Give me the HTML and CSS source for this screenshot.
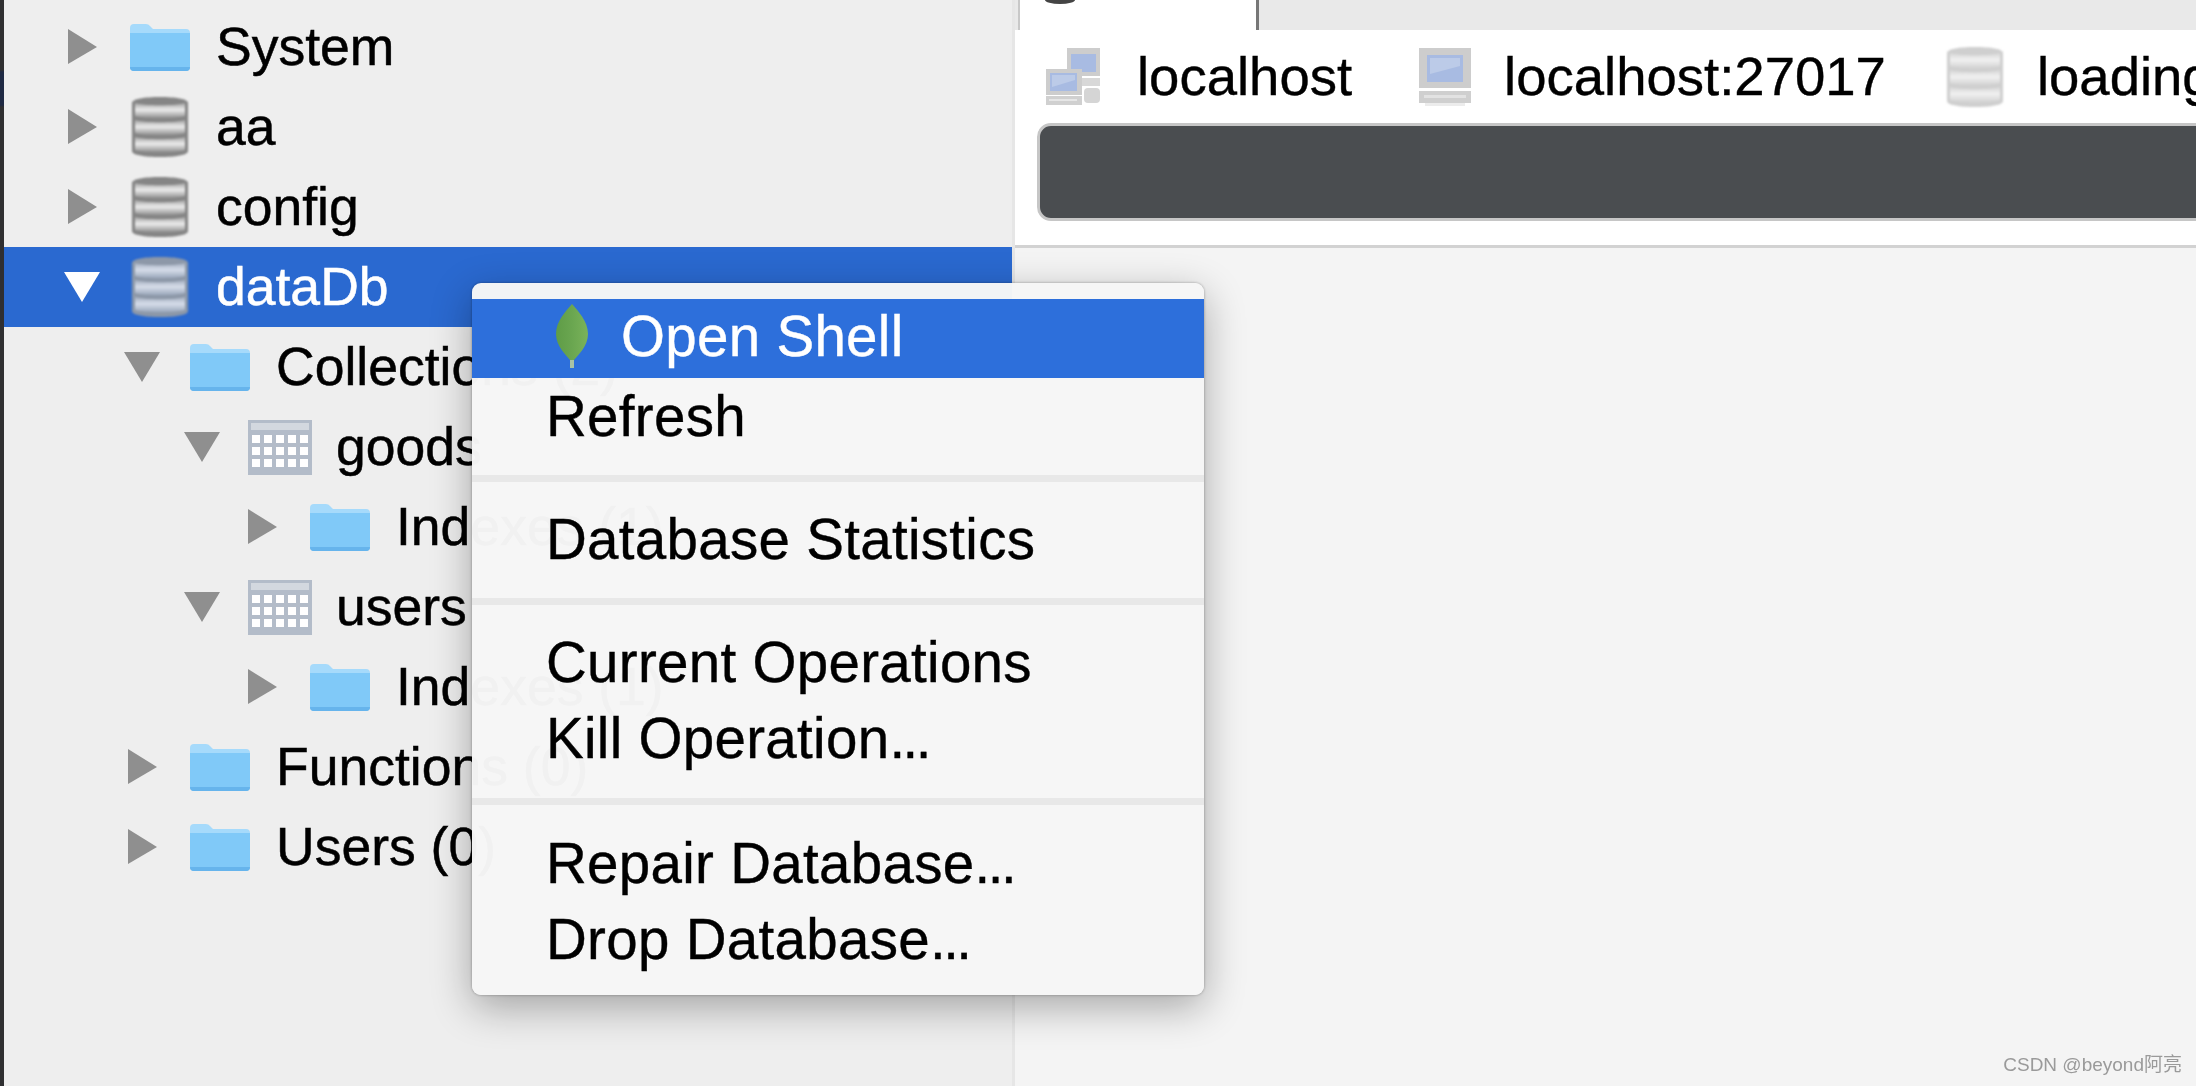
FILE: index.html
```html
<!DOCTYPE html>
<html lang="en">
<head>
  <meta charset="UTF-8">
  <meta name="viewport" content="width=device-width, initial-scale=1.0">
  <title>Robo 3T</title>
  <link rel="stylesheet" href="styles.css">
</head>
<body>
  <svg class="sprites" width="0" height="0">
    <defs>
      <linearGradient id="band" x1="0" y1="0" x2="0" y2="1">
        <stop offset="0" stop-color="#a3a3a3"/>
        <stop offset="0.45" stop-color="#ececec"/>
        <stop offset="1" stop-color="#8e8e8e"/>
      </linearGradient>
      <linearGradient id="bandLight" x1="0" y1="0" x2="0" y2="1">
        <stop offset="0" stop-color="#d6d6d6"/>
        <stop offset="0.45" stop-color="#f1f1f1"/>
        <stop offset="1" stop-color="#d2d2d2"/>
      </linearGradient>
      <linearGradient id="bandSel" x1="0" y1="0" x2="0" y2="1">
        <stop offset="0" stop-color="#a3aebf"/>
        <stop offset="0.45" stop-color="#d7deea"/>
        <stop offset="1" stop-color="#99a6ba"/>
      </linearGradient>
      <linearGradient id="leafFill" x1="0" y1="0" x2="1" y2="0">
        <stop offset="0" stop-color="#5f9c47"/>
        <stop offset="0.5" stop-color="#6aa650"/>
        <stop offset="1" stop-color="#7ab35a"/>
      </linearGradient>
      <symbol id="folder" viewBox="0 0 60 48">
        <path fill="#a6dafb" d="M0 5a4 4 0 0 1 4-4h12a5 5 0 0 1 4 2l3 3h33a4 4 0 0 1 4 4v6H0z"/>
        <path fill="#80c9f8" d="M0 10h60v34a4 4 0 0 1-4 4H4a4 4 0 0 1-4-4z"/>
        <path fill="#66b4ec" d="M0 44h60a4 4 0 0 1-4 4H4a4 4 0 0 1-4-4z"/>
      </symbol>
      <symbol id="table" viewBox="0 0 64 55">
        <rect width="64" height="55" fill="#b3bcc9"/>
        <rect x="3" y="3" width="58" height="7" fill="#d3d8df"/>
        <path fill="#fff" d="M4 15h8v8H4zM16 15h8v8h-8zM28 15h8v8h-8zM40 15h8v8h-8zM52 15h8v8h-8zM4 27h8v8H4zM16 27h8v8h-8zM28 27h8v8h-8zM40 27h8v8h-8zM52 27h8v8h-8zM4 39h8v8H4zM16 39h8v8h-8zM28 39h8v8h-8zM40 39h8v8h-8zM52 39h8v8h-8z"/>
      </symbol>
      <symbol id="db" viewBox="0 0 56 60">
        <path fill="#858585" d="M0 6C0 2 12 0 28 0s28 2 28 6v48c0 4-12 6-28 6S0 58 0 54z"/>
        <path fill="url(#band)" d="M3 6c8 3 42 3 50 0v13c-8 3-42 3-50 0z"/>
        <path fill="url(#band)" d="M3 23c8 3 42 3 50 0v13c-8 3-42 3-50 0z"/>
        <path fill="url(#band)" d="M3 40c8 3 42 3 50 0v13c-8 3-42 3-50 0z"/>
      </symbol>
      <symbol id="dbSel" viewBox="0 0 56 60">
        <path fill="#8d98a8" d="M0 6C0 2 12 0 28 0s28 2 28 6v48c0 4-12 6-28 6S0 58 0 54z"/>
        <path fill="url(#bandSel)" d="M3 6c8 3 42 3 50 0v13c-8 3-42 3-50 0z"/>
        <path fill="url(#bandSel)" d="M3 23c8 3 42 3 50 0v13c-8 3-42 3-50 0z"/>
        <path fill="url(#bandSel)" d="M3 40c8 3 42 3 50 0v13c-8 3-42 3-50 0z"/>
      </symbol>
      <symbol id="dbLight" viewBox="0 0 56 60">
        <path fill="#cfcfcf" d="M0 6C0 2 12 0 28 0s28 2 28 6v48c0 4-12 6-28 6S0 58 0 54z"/>
        <path fill="url(#bandLight)" d="M3 6c8 3 42 3 50 0v13c-8 3-42 3-50 0z"/>
        <path fill="url(#bandLight)" d="M3 23c8 3 42 3 50 0v13c-8 3-42 3-50 0z"/>
        <path fill="url(#bandLight)" d="M3 40c8 3 42 3 50 0v13c-8 3-42 3-50 0z"/>
      </symbol>
      <symbol id="computer" viewBox="0 0 52 58">
        <rect width="52" height="40" fill="#cdcdcd"/>
        <rect x="8" y="7" width="36" height="27" fill="#a8bbe2"/>
        <path fill="#bccbe8" d="M11 10h30v8L11 26z"/>
        <rect y="43" width="52" height="12" fill="#cfcfcf"/>
        <rect x="5" y="47" width="42" height="3" fill="#e2e2e2"/>
        <rect x="6" y="55" width="40" height="3" fill="#ececec"/>
      </symbol>
      <symbol id="network" viewBox="0 0 54 58">
        <rect x="21" y="0" width="33" height="28" fill="#cdcdcd"/>
        <rect x="25" y="6" width="25" height="18" fill="#a8bbe2"/>
        <rect x="36" y="30" width="18" height="8" fill="#d8d8d8"/>
        <rect x="38" y="40" width="16" height="15" rx="4" fill="#d5d5d5"/>
        <rect x="0" y="21" width="36" height="26" fill="#cdcdcd"/>
        <rect x="4" y="25" width="27" height="18" fill="#a8bbe2"/>
        <path fill="#bccbe8" d="M6 27h23v5L6 39z"/>
        <rect y="48" width="36" height="9" fill="#d0d0d0"/>
        <rect x="3" y="51" width="28" height="2" fill="#e6e6e6"/>
      </symbol>
      <symbol id="leaf" viewBox="0 0 32 64">
        <rect x="14" y="50" width="4" height="14" fill="#a9c3a5"/>
        <path fill="url(#leafFill)" d="M16 0c6 7 16 17 16 30 0 12-10 21-14 26h-4C10 51 0 42 0 30 0 17 10 7 16 0z"/>
      </symbol>
      <symbol id="arrow-right" viewBox="0 0 36 36"><path d="M4 0l29 18L4 35z"/></symbol>
      <symbol id="arrow-down" viewBox="0 0 36 36"><path d="M0 3h36L18 33z"/></symbol>
    </defs>
  </svg>

  <div class="app">
    <div class="edge"></div>

    <div class="sidebar">
      <div class="row">
        <svg class="arrow"><use href="#arrow-right"/></svg>
        <svg class="icon"><use href="#folder"/></svg>
        <span>System</span>
      </div>
      <div class="row">
        <svg class="arrow"><use href="#arrow-right"/></svg>
        <svg class="icon db"><use href="#db"/></svg>
        <span>aa</span>
      </div>
      <div class="row">
        <svg class="arrow"><use href="#arrow-right"/></svg>
        <svg class="icon db"><use href="#db"/></svg>
        <span>config</span>
      </div>
      <div class="row selected">
        <svg class="arrow"><use href="#arrow-down"/></svg>
        <svg class="icon db"><use href="#dbSel"/></svg>
        <span>dataDb</span>
      </div>
      <div class="row level-1">
        <svg class="arrow"><use href="#arrow-down"/></svg>
        <svg class="icon"><use href="#folder"/></svg>
        <span>Collections (2)</span>
      </div>
      <div class="row level-2">
        <svg class="arrow"><use href="#arrow-down"/></svg>
        <svg class="icon table"><use href="#table"/></svg>
        <span>goods</span>
      </div>
      <div class="row level-3">
        <svg class="arrow"><use href="#arrow-right"/></svg>
        <svg class="icon"><use href="#folder"/></svg>
        <span>Indexes (1)</span>
      </div>
      <div class="row level-2">
        <svg class="arrow"><use href="#arrow-down"/></svg>
        <svg class="icon table"><use href="#table"/></svg>
        <span>users</span>
      </div>
      <div class="row level-3">
        <svg class="arrow"><use href="#arrow-right"/></svg>
        <svg class="icon"><use href="#folder"/></svg>
        <span>Indexes (1)</span>
      </div>
      <div class="row level-1">
        <svg class="arrow"><use href="#arrow-right"/></svg>
        <svg class="icon"><use href="#folder"/></svg>
        <span>Functions (0)</span>
      </div>
      <div class="row level-1">
        <svg class="arrow"><use href="#arrow-right"/></svg>
        <svg class="icon"><use href="#folder"/></svg>
        <span>Users (0)</span>
      </div>
    </div>

    <div class="main">
      <div class="tabbar">
        <div class="tab"><div class="tab-glyph"></div></div>
      </div>
      <div class="shell">
        <div class="toolbar">
          <svg class="crumb-icon network"><use href="#network"/></svg>
          <span class="crumb crumb-host">localhost</span>
          <svg class="crumb-icon computer"><use href="#computer"/></svg>
          <span class="crumb crumb-port">localhost:27017</span>
          <svg class="crumb-icon dblight"><use href="#dbLight"/></svg>
          <span class="crumb">loading</span>
        </div>
        <div class="console"></div>
      </div>
    </div>

    <div class="menu">
      <div class="menu-item active">
        <svg class="leaf"><use href="#leaf"/></svg>
        <span>Open Shell</span>
      </div>
      <div class="menu-item">Refresh</div>
      <div class="menu-sep"></div>
      <div class="menu-item">Database Statistics</div>
      <div class="menu-sep"></div>
      <div class="menu-item">Current Operations</div>
      <div class="menu-item"><span>Kill Operation<span class="dots">...</span></span></div>
      <div class="menu-sep last"></div>
      <div class="menu-item"><span>Repair Database<span class="dots">...</span></span></div>
      <div class="menu-item"><span>Drop Database<span class="dots">...</span></span></div>
    </div>

    <div class="watermark">CSDN @beyond阿亮</div>
  </div>
</body>
</html>
```

FILE: styles.css
```css
html, body {
  margin: 0;
  height: 100%;
  overflow: hidden;
}
body {
  font-family: "Liberation Sans", "Noto Sans CJK SC", sans-serif;
  color: #000;
  background: #f4f4f4;
}
.sprites {
  position: absolute;
}
.app {
  display: flex;
  width: 2196px;
  height: 1086px;
  overflow: hidden;
  filter: blur(0.5px);
}
.edge {
  width: 4px;
  flex: none;
  background: linear-gradient(#2f2f31 0, #2f2f31 70px, #1f2a44 72px, #1f2a44 105px, #2f2f31 107px);
}

/* tree */
.sidebar {
  width: 1008px;
  flex: none;
  box-sizing: border-box;
  padding-top: 7px;
  background: #eeeeee;
  font-size: 53.5px;
  -webkit-text-stroke: 0.5px currentColor;
}
.row {
  display: flex;
  align-items: center;
  height: 80px;
  padding-left: 60px;
  white-space: nowrap;
}
.row span {
  margin-left: -2px;
  padding-bottom: 2px;
}
.row.level-1 { padding-left: 120px; }
.row.level-2 { padding-left: 180px; }
.row.level-3 { padding-left: 240px; }
.row.selected {
  background: #2a69d0;
  color: #fff;
}
.arrow {
  width: 36px;
  height: 36px;
  flex: none;
  margin-right: 30px;
  fill: #8f8f8f;
}
.selected .arrow {
  fill: #fff;
}
.icon {
  width: 60px;
  height: 48px;
  flex: none;
  margin-right: 28px;
}
.icon.db {
  width: 56px;
  height: 60px;
  margin-left: 2px;
  margin-right: 30px;
  filter: blur(1px);
}
.icon.table {
  width: 64px;
  height: 55px;
  margin-left: -2px;
  margin-right: 26px;
}

/* right side */
.main {
  flex: 1;
  min-width: 0;
  display: flex;
  flex-direction: column;
  border-left: 3px solid #e6e6e6;
}
.tabbar {
  height: 30px;
  flex: none;
  background: #e9e9e9;
}
.tab {
  width: 241px;
  height: 30px;
  margin-left: 3px;
  box-sizing: border-box;
  background: #fff;
  border-left: 2px solid #c8c8c8;
  border-right: 3px solid #777;
}
.tab-glyph {
  width: 30px;
  height: 4px;
  margin-left: 25px;
  background: #444;
  border-radius: 0 0 15px 15px / 0 0 4px 4px;
}
.shell {
  height: 215px;
  flex: none;
  background: #fff;
  border-bottom: 3px solid #d2d2d2;
}
.toolbar {
  display: flex;
  align-items: center;
  height: 93px;
  padding-left: 31px;
  white-space: nowrap;
}
.crumb {
  font-size: 54.5px;
  -webkit-text-stroke: 0.4px currentColor;
}
.crumb-icon {
  flex: none;
  height: 58px;
  margin-right: 36px;
  filter: blur(0.6px);
}
.crumb-host { margin-right: 67px; }
.crumb-port { margin-right: 61px; }
.network { width: 54px; margin-right: 37px; }
.computer { width: 52px; margin-right: 33px; }
.dblight { width: 56px; height: 60px; margin-right: 34px; filter: blur(1px); }
.console {
  height: 92px;
  margin-left: 22px;
  margin-right: -30px;
  background: #4a4d50;
  border: 3px solid #c6c6c6;
  border-radius: 14px;
}

/* context menu */
.menu {
  position: absolute;
  left: 472px;
  top: 283px;
  width: 732px;
  height: 712px;
  box-sizing: border-box;
  padding-top: 16px;
  background: rgba(246, 246, 246, 0.98);
  border-radius: 9px;
  box-shadow: 0 12px 40px rgba(0, 0, 0, 0.32), 0 0 3px rgba(0, 0, 0, 0.35);
  font-size: 56.5px;
  letter-spacing: 0.3px;
  -webkit-text-stroke: 0.4px currentColor;
}
.menu-item {
  display: flex;
  align-items: center;
  height: 76px;
  padding-left: 74px;
  white-space: nowrap;
}
.menu-item.active {
  height: 79px;
  padding-left: 84px;
  background: rgba(41, 108, 218, 0.98);
  color: #fff;
}
.menu-item.active span {
  margin-left: -1px;
  padding-bottom: 4px;
}
.dots {
  letter-spacing: -2.5px;
}
.leaf {
  width: 32px;
  height: 64px;
  flex: none;
  margin-right: 34px;
  margin-bottom: 6px;
}
.menu-sep {
  height: 7px;
  margin: 21px 0 19px;
  background: #e8e8e8;
}
.menu-sep.last {
  margin: 22px 0 20px;
}

.watermark {
  position: absolute;
  right: 14px;
  bottom: 10px;
  font-size: 19px;
  color: #9a9a9a;
}
```
